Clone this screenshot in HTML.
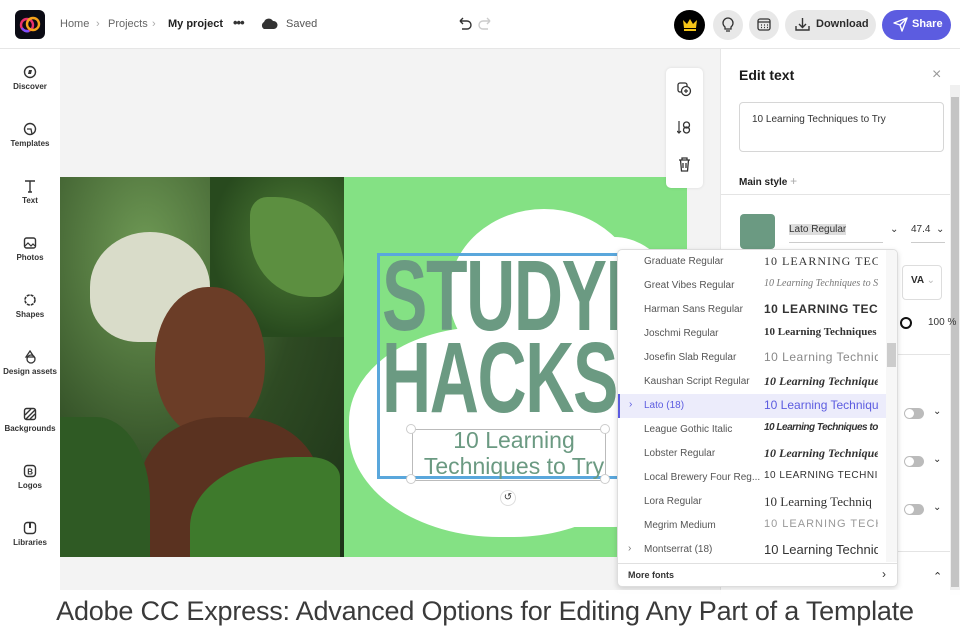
<!DOCTYPE html>
<html><head><meta charset="utf-8"><style>
*{box-sizing:border-box;margin:0;padding:0}
body{width:960px;height:640px;overflow:hidden;background:#fff;font-family:"Liberation Sans",sans-serif;position:relative;color:#2c2c2c}
.abs{position:absolute}
.top{left:0;top:0;width:960px;height:49px;background:#fff;border-bottom:1px solid #e6e6e6}
.side{left:0;top:49px;width:60px;height:545px;background:#fff}
.side div{position:absolute;left:0;width:60px;text-align:center;font-size:8px;font-weight:bold;color:#333}
.side svg{display:block;margin:0 auto 3px}
.canvas{left:60px;top:49px;width:661px;height:545px;background:#f3f3f3}
.row{position:absolute;left:0;width:268px;height:24px;font-size:10px;color:#555}
.row .n{position:absolute;left:26px;top:6px}
.row .p{position:absolute;left:146px;top:4px;font-size:12px;color:#333;white-space:nowrap;overflow:hidden;width:114px}
.bc{position:absolute;top:18px;font-size:11px;color:#666}
</style></head><body>
<div class="abs top">
  <div class="abs" style="left:15px;top:10px;width:30px;height:29px;background:#0b0b14;border-radius:6px"></div>
  <svg class="abs" style="left:18px;top:14px" width="24" height="21" viewBox="0 0 24 21"><circle cx="9" cy="11" r="6" fill="none" stroke="#e8306c" stroke-width="2.4"/><circle cx="15" cy="10" r="6" fill="none" stroke="#f6a21b" stroke-width="2.4"/><path d="M4 14 a6 6 0 0 0 7 3" stroke="#7c4dff" stroke-width="2.4" fill="none"/></svg>
  <div class="bc" style="left:60px">Home</div>
  <div class="bc" style="left:96px;color:#aaa">›</div>
  <div class="bc" style="left:108px">Projects</div>
  <div class="bc" style="left:152px;color:#aaa">›</div>
  <div class="bc" style="left:168px;color:#222;font-weight:bold">My project</div>
  <div class="abs" style="left:233px;top:15px;font-size:13px;font-weight:bold;color:#333;letter-spacing:-1px">•••</div>
  <svg class="abs" style="left:260px;top:18px" width="18" height="11" viewBox="0 0 18 11"><path d="M4 11 a4 4 0 0 1 0-7 a5 5 0 0 1 9-1 a4 4 0 0 1 1 8z" fill="#333"/></svg>
  <div class="bc" style="left:286px;color:#555">Saved</div>
  <svg class="abs" style="left:457px;top:17px" width="36" height="14" viewBox="0 0 36 14"><path d="M3 4h7a4 4 0 0 1 0 8H5M3 4l3-3M3 4l3 3" stroke="#333" stroke-width="1.4" fill="none"/><path d="M33 4h-7a4 4 0 0 0 0 8h5M33 4l-3-3M33 4l-3 3" stroke="#ccc" stroke-width="1.4" fill="none"/></svg>
  <div class="abs" style="left:674px;top:10px;width:31px;height:30px;border-radius:50%;background:#000"></div>
  <svg class="abs" style="left:682px;top:18px" width="16" height="13" viewBox="0 0 16 13"><path d="M1 2l4 4 3-5 3 5 4-4-1 8H2z" fill="#f5c518"/><rect x="2" y="11" width="12" height="2" fill="#f5c518"/></svg>
  <div class="abs" style="left:713px;top:10px;width:30px;height:30px;border-radius:50%;background:#e8e8e8"></div>
  <svg class="abs" style="left:721px;top:17px" width="14" height="16" viewBox="0 0 14 16"><path d="M4 10a5 5 0 1 1 6 0v2H4z M5 14h4" stroke="#333" stroke-width="1.3" fill="none"/></svg>
  <div class="abs" style="left:749px;top:10px;width:30px;height:30px;border-radius:50%;background:#e8e8e8"></div>
  <svg class="abs" style="left:757px;top:17px" width="14" height="14" viewBox="0 0 14 14"><rect x="1" y="2" width="12" height="11" rx="2" stroke="#333" stroke-width="1.3" fill="none"/><path d="M1 5h12M4 8h1M7 8h1M10 8h1M4 10.5h1M7 10.5h1M10 10.5h1" stroke="#333" stroke-width="1.2"/></svg>
  <div class="abs" style="left:785px;top:10px;width:91px;height:30px;border-radius:15px;background:#e8e8e8"></div>
  <svg class="abs" style="left:795px;top:17px" width="15" height="15" viewBox="0 0 15 15"><path d="M7.5 1v9M4 7l3.5 3.5L11 7M1 9v4h13V9" stroke="#333" stroke-width="1.4" fill="none"/></svg>
  <div class="abs" style="left:816px;top:18px;font-size:11px;font-weight:bold;color:#2c2c2c">Download</div>
  <div class="abs" style="left:882px;top:10px;width:69px;height:30px;border-radius:15px;background:#5c5ce0"></div>
  <svg class="abs" style="left:893px;top:17px" width="15" height="15" viewBox="0 0 15 15"><path d="M1 6l13-5-5 13-2-6z M7 8l7-7" stroke="#fff" stroke-width="1.4" fill="none" stroke-linejoin="round"/></svg>
  <div class="abs" style="left:912px;top:18px;font-size:11px;font-weight:bold;color:#fff">Share</div>
</div>

<div class="abs side">
  <div style="top:16px"><svg width="14" height="14" viewBox="0 0 14 14"><circle cx="7" cy="7" r="5.5" stroke="#333" stroke-width="1.4" fill="none"/><path d="M5 9l1-4 3 0-1 4z" fill="#333"/></svg>Discover</div>
  <div style="top:73px"><svg width="14" height="14" viewBox="0 0 14 14"><circle cx="7" cy="7" r="5.5" stroke="#333" stroke-width="1.4" fill="none"/><path d="M4 7h4l1 5" stroke="#333" stroke-width="1.3" fill="none"/></svg>Templates</div>
  <div style="top:130px"><svg width="14" height="14" viewBox="0 0 14 14"><path d="M2 2h10M7 2v11M5 13h4" stroke="#333" stroke-width="1.4" fill="none"/></svg>Text</div>
  <div style="top:187px"><svg width="14" height="14" viewBox="0 0 14 14"><rect x="1.5" y="2" width="11" height="10" rx="2" stroke="#333" stroke-width="1.4" fill="none"/><path d="M2 10l3-3 3 3 2-2 2 2" stroke="#333" stroke-width="1.2" fill="none"/></svg>Photos</div>
  <div style="top:244px"><svg width="14" height="14" viewBox="0 0 14 14"><circle cx="7" cy="7" r="5" stroke="#333" stroke-width="1.6" fill="none" stroke-dasharray="3 1"/></svg>Shapes</div>
  <div style="top:301px"><svg width="14" height="14" viewBox="0 0 14 14"><path d="M7 1l4 6H3z" stroke="#333" stroke-width="1.3" fill="none"/><circle cx="8" cy="9" r="4" stroke="#333" stroke-width="1.3" fill="none"/></svg>Design assets</div>
  <div style="top:358px"><svg width="14" height="14" viewBox="0 0 14 14"><rect x="1.5" y="1.5" width="11" height="11" rx="2" stroke="#333" stroke-width="1.4" fill="none"/><path d="M2 8l6-6M3 12l9-9M7 12l5-5" stroke="#333" stroke-width="1.4"/></svg>Backgrounds</div>
  <div style="top:415px"><svg width="14" height="14" viewBox="0 0 14 14"><rect x="1.5" y="1.5" width="11" height="11" rx="3" stroke="#333" stroke-width="1.4" fill="none"/><text x="4.3" y="10.5" font-size="8" font-weight="bold" font-family="Liberation Sans" fill="#333">B</text></svg>Logos</div>
  <div style="top:472px"><svg width="14" height="14" viewBox="0 0 14 14"><rect x="1.5" y="1.5" width="11" height="11" rx="3" stroke="#333" stroke-width="1.4" fill="none"/><path d="M7 2v5" stroke="#333" stroke-width="2"/></svg>Libraries</div>
</div>

<div class="abs canvas"></div>
<!-- photo -->
<div class="abs" style="left:60px;top:177px;width:284px;height:380px;overflow:hidden;background:radial-gradient(ellipse at 30% 20%,#6f9a55,#2e4a23 55%,#1d3318)">
  <div class="abs" style="left:150px;top:0;width:140px;height:160px;background:radial-gradient(ellipse at 60% 40%,#4f7e37,#284a1e 70%)"></div>
  <div class="abs" style="left:30px;top:55px;width:120px;height:110px;border-radius:50% 50% 40% 40%;background:#d9dcc9"></div>
  <div class="abs" style="left:95px;top:110px;width:110px;height:150px;border-radius:48%;background:#6b3d27"></div>
  <div class="abs" style="left:80px;top:240px;width:180px;height:150px;border-radius:45% 45% 0 0;background:#5a3220"></div>
  <div class="abs" style="left:0;top:240px;width:90px;height:140px;background:#2f5a24;border-radius:0 60% 0 0"></div>
  <div class="abs" style="left:130px;top:280px;width:150px;height:100px;background:#3e7a2c;border-radius:70% 20% 0 0"></div>
  <div class="abs" style="left:190px;top:20px;width:94px;height:100px;background:#5c8f40;border-radius:20% 80% 30% 70%"></div>
</div>
<!-- green card -->
<div class="abs" style="left:344px;top:177px;width:343px;height:380px;background:#84e184;overflow:hidden">
  <div class="abs" style="left:105px;top:32px;width:190px;height:170px;border-radius:50%;background:#fff"></div>
  <div class="abs" style="left:5px;top:150px;width:300px;height:210px;border-radius:45% 55% 45% 50%;background:#fff"></div>
  <div class="abs" style="left:150px;top:60px;width:200px;height:290px;border-radius:40%;background:#fff"></div>
  <div class="abs" style="left:38px;top:78px;font-family:'Liberation Sans Narrow','Liberation Sans',sans-serif;font-weight:bold;font-size:100px;line-height:82px;color:#6b9a82;letter-spacing:-2px;transform:scaleX(0.68);transform-origin:left top;white-space:nowrap">STUDYING<br>HACKS</div>
  <div class="abs" style="left:33px;top:76px;width:320px;height:226px;border:3px solid #5aa7dc;border-right:none"></div>
  <div class="abs" style="left:68px;top:252px;width:194px;height:52px;border:1px solid #bbb"></div>
  <div class="abs" style="left:60px;top:250px;width:220px;text-align:center;font-size:23px;line-height:26px;color:#6b9a82">10 Learning<br>Techniques to Try</div>
  <div class="abs" style="left:62px;top:247px;width:10px;height:10px;border-radius:50%;background:#fff;border:1px solid #ccc"></div>
  <div class="abs" style="left:256px;top:247px;width:10px;height:10px;border-radius:50%;background:#fff;border:1px solid #ccc"></div>
  <div class="abs" style="left:62px;top:297px;width:10px;height:10px;border-radius:50%;background:#fff;border:1px solid #ccc"></div>
  <div class="abs" style="left:256px;top:297px;width:10px;height:10px;border-radius:50%;background:#fff;border:1px solid #ccc"></div>
  <div class="abs" style="left:156px;top:313px;width:16px;height:16px;border-radius:50%;background:#fff;border:1px solid #ddd;font-size:10px;text-align:center;line-height:14px;color:#333">↺</div>
</div>
<!-- floating toolbar -->
<div class="abs" style="left:666px;top:68px;width:37px;height:120px;background:#fff;border-radius:5px;box-shadow:0 0 3px rgba(0,0,0,.1)"></div>
<svg class="abs" style="left:677px;top:82px" width="15" height="15" viewBox="0 0 15 15"><rect x="1" y="1" width="9" height="9" rx="2" stroke="#333" stroke-width="1.3" fill="none"/><circle cx="9" cy="9" r="4.5" stroke="#333" stroke-width="1.3" fill="#fff"/><path d="M9 7v4M7 9h4" stroke="#333" stroke-width="1.2"/></svg>
<svg class="abs" style="left:677px;top:120px" width="15" height="15" viewBox="0 0 15 15"><path d="M2 1v12M0 11l2 2 2-2" stroke="#333" stroke-width="1.2" fill="none"/><circle cx="9.5" cy="5" r="3" stroke="#333" stroke-width="1.3" fill="none"/><circle cx="9.5" cy="10" r="3" stroke="#333" stroke-width="1.3" fill="none"/></svg>
<svg class="abs" style="left:678px;top:157px" width="13" height="15" viewBox="0 0 13 15"><path d="M1 3h11M4 3V1h5v2M2.5 3l1 11h6l1-11M5 6v5M8 6v5" stroke="#333" stroke-width="1.3" fill="none"/></svg>

<!-- right panel -->
<div class="abs" style="left:720px;top:49px;width:1px;height:545px;background:#e6e6e6"></div>
<div class="abs" style="left:739px;top:67px;font-size:14px;font-weight:bold;color:#1a1a1a">Edit text</div>
<div class="abs" style="left:932px;top:66px;font-size:16px;color:#999">×</div>
<div class="abs" style="left:950px;top:85px;width:10px;height:510px;background:#f0f0f0"></div>
<div class="abs" style="left:951px;top:97px;width:8px;height:490px;background:#c4c4c4"></div>
<div class="abs" style="left:739px;top:102px;width:205px;height:50px;border:1px solid #d6d6d6;border-radius:4px"></div>
<div class="abs" style="left:752px;top:114px;font-size:10px;color:#333">10 Learning Techniques to Try</div>
<div class="abs" style="left:739px;top:174px;font-size:10px;font-weight:bold;color:#222">Main style <span style="color:#aaa;font-weight:normal;font-size:12px">+</span></div>
<div class="abs" style="left:721px;top:194px;width:229px;height:1px;background:#e4e4e4"></div>
<div class="abs" style="left:740px;top:214px;width:35px;height:35px;border-radius:4px;background:#6b9a82"></div>
<div class="abs" style="left:789px;top:224px;font-size:10px;color:#333;background:#ddd">Lato Regular</div>
<div class="abs" style="left:789px;top:242px;width:94px;height:1px;background:#ccc"></div>
<div class="abs" style="left:890px;top:224px;font-size:10px;color:#333">⌄</div>
<div class="abs" style="left:911px;top:224px;font-size:10px;color:#333">47.4 &nbsp;⌄</div>
<div class="abs" style="left:911px;top:242px;width:34px;height:1px;background:#ccc"></div>
<div class="abs" style="left:902px;top:265px;width:40px;height:35px;border:1px solid #ddd;border-radius:4px;font-size:10px;font-weight:bold;padding:9px 0 0 8px">VA <span style="color:#bbb;font-weight:normal">⌄</span></div>
<div class="abs" style="left:900px;top:317px;width:12px;height:12px;border-radius:50%;border:2px solid #111"></div>
<div class="abs" style="left:928px;top:317px;font-size:10px;color:#333">100 %</div>
<div class="abs" style="left:721px;top:354px;width:229px;height:1px;background:#e4e4e4"></div>
<div class="abs" style="left:904px;top:408px;width:20px;height:11px;border-radius:6px;background:#bbb"></div><div class="abs" style="left:905px;top:409px;width:9px;height:9px;border-radius:50%;background:#fff"></div><div class="abs" style="left:933px;top:406px;font-size:10px">⌄</div>
<div class="abs" style="left:904px;top:456px;width:20px;height:11px;border-radius:6px;background:#bbb"></div><div class="abs" style="left:905px;top:457px;width:9px;height:9px;border-radius:50%;background:#fff"></div><div class="abs" style="left:933px;top:454px;font-size:10px">⌄</div>
<div class="abs" style="left:904px;top:504px;width:20px;height:11px;border-radius:6px;background:#bbb"></div><div class="abs" style="left:905px;top:505px;width:9px;height:9px;border-radius:50%;background:#fff"></div><div class="abs" style="left:933px;top:502px;font-size:10px">⌄</div>
<div class="abs" style="left:721px;top:551px;width:229px;height:1px;background:#e4e4e4"></div>
<div class="abs" style="left:933px;top:570px;font-size:11px">⌃</div>

<!-- dropdown -->
<div class="abs" style="left:617px;top:249px;width:281px;height:338px;background:#fff;border:1px solid #ddd;border-radius:5px;box-shadow:0 2px 6px rgba(0,0,0,.15);overflow:hidden">
  <div class="row" style="top:0"><span class="n">Graduate Regular</span><span class="p" style="font-family:'Liberation Serif',serif;letter-spacing:1px">10 LEARNING TECH</span></div>
  <div class="row" style="top:24px"><span class="n">Great Vibes Regular</span><span class="p" style="font-family:'Liberation Serif',serif;font-style:italic;color:#777;font-size:10px">10 Learning Techniques to Sucess</span></div>
  <div class="row" style="top:48px"><span class="n">Harman Sans Regular</span><span class="p" style="font-weight:bold;letter-spacing:.5px">10 LEARNING TECHNIQ</span></div>
  <div class="row" style="top:72px"><span class="n">Joschmi Regular</span><span class="p" style="font-family:'Liberation Serif',serif;font-weight:bold;font-size:11px">10 Learning Techniques to</span></div>
  <div class="row" style="top:96px"><span class="n">Josefin Slab Regular</span><span class="p" style="color:#888;letter-spacing:.5px">10 Learning Technique</span></div>
  <div class="row" style="top:120px"><span class="n">Kaushan Script Regular</span><span class="p" style="font-family:'Liberation Serif',serif;font-style:italic;font-weight:bold">10 Learning Techniques</span></div>
  <div class="row" style="top:144px;background:#ececfb;border-left:2px solid #5c5ce0"><span class="n" style="color:#5c5ce0;left:24px">Lato (18)</span><span style="position:absolute;left:9px;top:5px;color:#5c5ce0">›</span><span class="p" style="color:#5c5ce0;left:144px">10 Learning Techniques</span></div>
  <div class="row" style="top:168px"><span class="n">League Gothic Italic</span><span class="p" style="font-style:italic;font-weight:bold;font-size:10px;letter-spacing:-.5px">10 Learning Techniques to Try</span></div>
  <div class="row" style="top:192px"><span class="n">Lobster Regular</span><span class="p" style="font-family:'Liberation Serif',serif;font-style:italic;font-weight:bold">10 Learning Techniques to</span></div>
  <div class="row" style="top:216px"><span class="n">Local Brewery Four Reg...</span><span class="p" style="font-size:10px;letter-spacing:.5px">10 LEARNING TECHNIQUES TO</span></div>
  <div class="row" style="top:240px"><span class="n">Lora Regular</span><span class="p" style="font-family:'Liberation Serif',serif;font-size:13px">10 Learning Techniq</span></div>
  <div class="row" style="top:264px"><span class="n">Megrim Medium</span><span class="p" style="color:#999;letter-spacing:1px;font-size:11px">10 LEARNING TECHNIQUE</span></div>
  <div class="row" style="top:288px"><span class="n">Montserrat (18)</span><span style="position:absolute;left:10px;top:5px;color:#777">›</span><span class="p" style="font-size:13px">10 Learning Techniques</span></div>
  <div class="abs" style="left:268px;top:0;width:12px;height:312px;background:#f7f7f7"></div>
  <div class="abs" style="left:269px;top:93px;width:9px;height:24px;background:#ccc"></div>
  <div class="abs" style="left:0;top:313px;width:281px;height:1px;background:#e0e0e0"></div>
  <div class="abs" style="left:10px;top:320px;font-size:9px;font-weight:bold;color:#333">More fonts</div>
  <div class="abs" style="left:264px;top:317px;font-size:12px;color:#333">›</div>
</div>

<!-- caption -->
<div class="abs" style="left:0;top:590px;width:960px;height:50px;background:rgba(255,255,255,.93)"></div>
<div class="abs" style="left:0;top:596px;width:970px;text-align:center;font-size:27px;color:#3a3a3a;letter-spacing:-0.2px;white-space:nowrap">Adobe CC Express: Advanced Options for Editing Any Part of a Template</div>
</body></html>
